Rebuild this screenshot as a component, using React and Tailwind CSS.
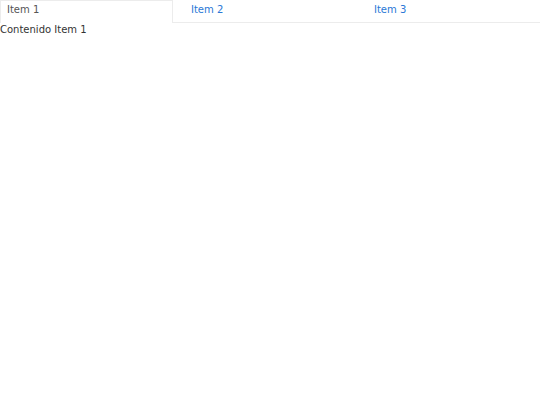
import React, { useState } from 'react';

const items = [
  { id: 1, label: 'Item 1', content: 'Contenido Item 1' },
  { id: 2, label: 'Item 2', content: 'Contenido Item 2' },
  { id: 3, label: 'Item 3', content: 'Contenido Item 3' },
];

export default function App() {
  const [active, setActive] = useState(1);
  const current = items.find((i) => i.id === active);

  return (
    <div className="w-[540px] h-[405px] bg-white text-[#333333] text-[10px] font-['DejaVu_Sans',sans-serif]">
      {/* Tabs */}
      <div className="flex h-[23px]">
        {items.map((item, idx) => {
          const isActive = item.id === active;
          const width = idx === 0 ? 'w-[173px]' : idx === 1 ? 'w-[183px]' : 'flex-1';
          const pad = idx === 0 ? 'pl-[6px]' : 'pl-[18px]';
          return (
            <button
              key={item.id}
              onClick={() => setActive(item.id)}
              className={`${width} ${pad} text-left leading-[12px] pt-[3px] self-stretch flex items-start ${
                isActive
                  ? 'border border-b-0 border-[#ececec] text-[#555555]'
                  : 'border-t border-t-transparent border-b border-b-[#ececec] text-[#2a78d6]'
              }`}
            >
              {item.label}
            </button>
          );
        })}
      </div>
      <div className="leading-[10px] pt-[2px]">{current.content}</div>
    </div>
  );
}
